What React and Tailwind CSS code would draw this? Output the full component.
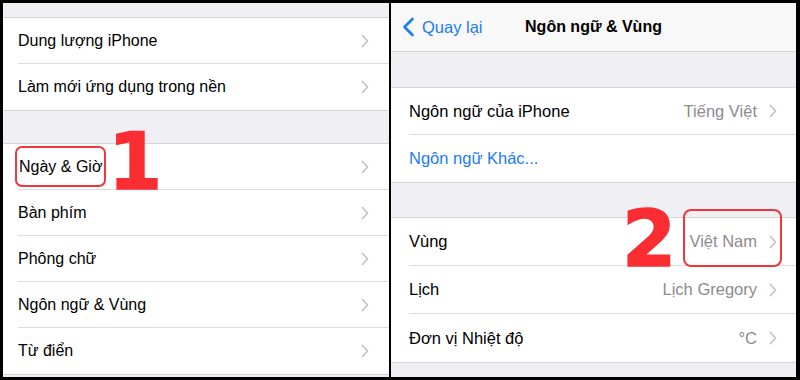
import React from 'react';

const FONT = { fontFamily: '"Liberation Sans", Arial, sans-serif' };
const NUM_FONT = { fontFamily: '"DejaVu Sans", sans-serif' };

function Chevron({ className = '' }) {
  return (
    <svg width="8" height="14" viewBox="0 0 8 14" className={className}>
      <polyline points="1.5,1.5 6.5,7 1.5,12.5" fill="none" stroke="#c4c4c7" strokeWidth="1.7" strokeLinecap="round" strokeLinejoin="round" />
    </svg>
  );
}

function Row({ label, value, last, blue, pad = 'pl-[15px]', height = 'h-[46px]', right = 'pr-[20px]', children }) {
  return (
    <div className={`${pad} bg-white`}>
      <div className={`${height} ${right} flex items-center justify-between ${last ? '' : 'border-b border-[#dcdce0]'}`}>
        {children || (
          <span className={blue ? 'text-[#1a7cf5]' : 'text-black'}>{label}</span>
        )}
        {!blue && (
          <div className="flex items-center gap-[12px]">
            {value && <span className="text-[#8b8b90]">{value}</span>}
            <Chevron />
          </div>
        )}
      </div>
    </div>
  );
}

function LeftPanel() {
  return (
    <div className="relative w-[386px] h-full bg-[#efeff4] flex flex-col text-[16px]" style={FONT}>
      <div className="h-[14px]" />
      <div className="border-y border-[#d6d6da]">
        <Row label="Dung lượng iPhone" />
        <Row label="Làm mới ứng dụng trong nền" last />
      </div>
      <div className="h-[32px]" />
      <div className="border-y border-[#d6d6da]">
        <Row>
          <span className="-ml-[3px] h-[41px] px-[2px] flex items-center border-2 border-[#f0383c] rounded-[7px] text-black">
            Ngày &amp; Giờ
          </span>
        </Row>
        <Row label="Bàn phím" />
        <Row label="Phông chữ" />
        <Row label="Ngôn ngữ & Vùng" />
        <Row label="Từ điển" last />
      </div>
      {/* step annotation */}
      <span
        className="absolute left-[105px] top-[120px] text-[78px] font-bold leading-none text-[#fa2d32] [-webkit-text-stroke:1.5px_#fa2d32]"
        style={NUM_FONT}
      >
        1
      </span>
    </div>
  );
}

function RightPanel() {
  const rp = 'pl-[18px]';
  const rr = 'pr-[19px]';
  return (
    <div className="relative w-[405px] h-full bg-[#efeff4] flex flex-col text-[16.5px]" style={FONT}>
      <div className="h-[49px] bg-[#f8f8f8] border-b border-[#d6d6da] grid grid-cols-[1fr_auto_1fr] items-center">
        <div className="flex items-center pl-[11px] text-[#1a7cf5]">
          <svg width="13" height="20" viewBox="0 0 13 20">
            <polyline points="10.5,2 2.5,10 10.5,18" fill="none" stroke="#1a7cf5" strokeWidth="2.6" strokeLinecap="round" strokeLinejoin="round" />
          </svg>
          <span className="ml-[7px]">Quay lại</span>
        </div>
        <span className="font-bold text-black text-[16px]">Ngôn ngữ &amp; Vùng</span>
        <div />
      </div>
      <div className="h-[35px]" />
      <div className="border-y border-[#d6d6da]">
        <Row label="Ngôn ngữ của iPhone" value="Tiếng Việt" pad={rp} height="h-[47px]" right={rr} />
        <Row label="Ngôn ngữ Khác..." blue last pad={rp} height="h-[47px]" right={rr} />
      </div>
      <div className="h-[34px]" />
      <div className="border-y border-[#d6d6da]">
        <Row label="Vùng" value="Việt Nam" pad={rp} height="h-[48px]" right={rr} />
        <Row label="Lịch" value="Lịch Gregory" pad={rp} height="h-[48px]" right={rr} />
        <Row label="Đơn vị Nhiệt độ" value="°C" last pad={rp} height="h-[48px]" right={rr} />
      </div>
      {/* step annotation + highlight */}
      <span
        className="absolute left-[231px] top-[197px] text-[78px] font-bold leading-none text-[#fa2d32] [-webkit-text-stroke:1.5px_#fa2d32]"
        style={NUM_FONT}
      >
        2
      </span>
      <div className="absolute left-[292px] top-[206px] w-[99px] h-[58px] border-2 border-[#f0383c] rounded-[8px]" />
    </div>
  );
}

export default function App() {
  return (
    <div className="w-[800px] h-[380px] bg-black pt-[3px] pb-[3px] pl-[3px] pr-[4px] flex gap-[2px] overflow-hidden">
      <LeftPanel />
      <RightPanel />
    </div>
  );
}
